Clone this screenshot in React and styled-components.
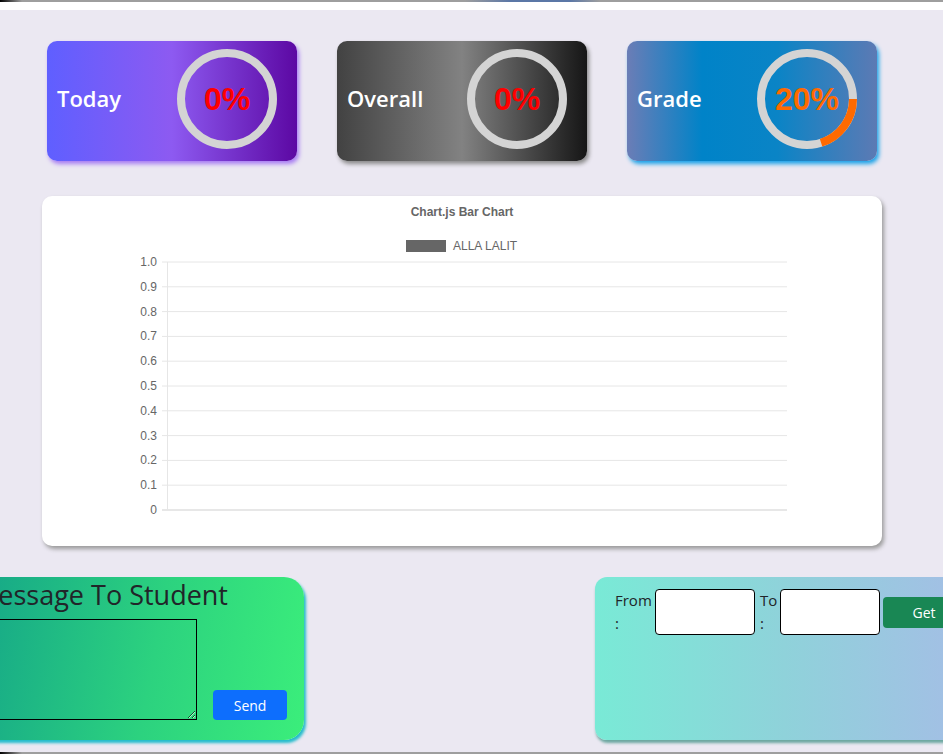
import React from 'react';
import styled, { createGlobalStyle } from 'styled-components';

const GlobalStyle = createGlobalStyle`
  html, body {
    margin: 0;
    padding: 0;
    overflow: hidden;
  }
  body {
    font-family: "Open Sans", "Noto Sans", sans-serif;
    background: #ebe8f2;
  }
`;

const stats = [
    { id: 1, label: 'Today', value: 0, color: '#ff0000', bg: 'linear-gradient(to right, #5f5fff 0%, #8d5af1 50%, #5c08a3 100%)', shadow: '#a77cf3' },
    { id: 2, label: 'Overall', value: 0, color: '#ff0000', bg: 'linear-gradient(to right, #424242 0%, #828282 50%, #161616 100%)', shadow: '#8a8a8a' },
    { id: 3, label: 'Grade', value: 20, color: '#ff6a00', bg: 'linear-gradient(to right, #6b7db6 0%, #0083c8 30%, #0a84c6 60%, #5c7ab4 100%)', shadow: '#1aa2e8' },
];

const ticks = ['1.0', '0.9', '0.8', '0.7', '0.6', '0.5', '0.4', '0.3', '0.2', '0.1', '0'];

function Ring({ value, color }) {
    const r = 46;
    const c = 2 * Math.PI * r;
    return (
        <RingBox>
            <svg width="100" height="100" viewBox="0 0 100 100">
                <circle cx="50" cy="50" r={r} fill="none" stroke="#d4d4d4" strokeWidth="8" />
                {value > 0 && (
                    <circle
                        cx="50" cy="50" r={r} fill="none" stroke="#ff6a00" strokeWidth="8"
                        strokeDasharray={`${(c * value) / 100} ${c}`}
                    />
                )}
            </svg>
            <RingText color={color}>{value}%</RingText>
        </RingBox>
    );
}

function BarChart() {
    const top = 66;
    const step = 24.8;
    return (
        <svg width="840" height="350" viewBox="0 0 840 350">
            <text x="420" y="20" textAnchor="middle" fontFamily="Liberation Sans, Arial, sans-serif" fontSize="12" fontWeight="bold" fill="#666">
                Chart.js Bar Chart
            </text>
            <rect x="364" y="44" width="40" height="12" fill="#666" />
            <text x="411" y="54" fontFamily="Liberation Sans, Arial, sans-serif" fontSize="12" fill="#666">ALLA LALIT</text>
            {ticks.map((t, i) => {
                const y = top + i * step;
                return (
                    <g key={t}>
                        <line x1="120" x2="745" y1={y} y2={y} stroke={i === ticks.length - 1 ? '#cfcfcf' : '#e6e6e6'} strokeWidth="1" />
                        <text x="115" y={y + 4} textAnchor="end" fontFamily="Liberation Sans, Arial, sans-serif" fontSize="12" fill="#666">{t}</text>
                    </g>
                );
            })}
            <line x1="125.5" x2="125.5" y1={top} y2={top + 10 * step} stroke="#e6e6e6" strokeWidth="1" />
        </svg>
    );
}

function App() {
    return (
        <Page>
            <GlobalStyle />
            <TopBar />
            <TopGap />
            <Main>
                <StatRow>
                    {stats.map((s) => (
                        <StatCard key={s.id} $bg={s.bg} $shadow={s.shadow}>
                            <StatLabel>{s.label}</StatLabel>
                            <Ring value={s.value} color={s.color} />
                        </StatCard>
                    ))}
                </StatRow>

                <ChartCard>
                    <BarChart />
                </ChartCard>

                <BottomRow>
                    <MessageCard>
                        <MessageTitle>Message To Student</MessageTitle>
                        <MessageBody>
                            <MessageInput />
                            <SendButton>Send</SendButton>
                        </MessageBody>
                    </MessageCard>

                    <FilterCard>
                        <FieldLabel $w={40}>From :</FieldLabel>
                        <DateInput />
                        <FieldLabel $w={20}>To :</FieldLabel>
                        <DateInput />
                        <GetButton>Get</GetButton>
                    </FilterCard>
                </BottomRow>
            </Main>
            <BottomBar />
        </Page>
    );
}

const Page = styled.div`
width: 943px;
height: 754px;
overflow: hidden;
display: flex;
flex-direction: column;
`;

const TopBar = styled.div`
height: 2px;
background: linear-gradient(to right, #000 0px, #9e9e9e 22px, #9e9e9e 465px, #5b77a6 510px, #5b77a6 570px, #9e9e9e 600px);
`;

const TopGap = styled.div`
height: 8px;
background: #fff;
`;

const Main = styled.div`
flex: 1;
background: #ebe8f2;
display: flex;
flex-direction: column;
`;

const StatRow = styled.div`
display: flex;
gap: 40px;
padding: 31px 0 0 47px;
`;

const StatCard = styled.div`
width: 250px;
height: 120px;
box-sizing: border-box;
border-radius: 10px;
background: ${(p) => p.$bg};
box-shadow: 2px 3px 4px ${(p) => p.$shadow};
display: flex;
align-items: center;
justify-content: space-between;
padding: 0 20px 4px 10px;
`;

const StatLabel = styled.div`
color: #fff;
font-size: 22px;
font-weight: 600;
margin-bottom: 3px;
`;

const RingBox = styled.div`
display: grid;
place-items: center;
width: 100px;
height: 100px;

> * {
    grid-area: 1 / 1;
}
`;

const RingText = styled.div`
color: ${(p) => p.color};
font-family: "Liberation Sans", Arial, sans-serif;
font-weight: bold;
font-size: 32px;
`;

const ChartCard = styled.div`
margin: 35px 0 0 42px;
width: 840px;
height: 350px;
background: #fff;
border-radius: 10px;
box-shadow: 2px 3px 4px #9a9a9a;
`;

const BottomRow = styled.div`
display: flex;
justify-content: space-between;
margin-top: 31px;
`;

const MessageCard = styled.div`
margin-left: -34px;
width: 338px;
height: 163px;
box-sizing: border-box;
padding: 1px 17px 0 10px;
border-radius: 20px;
background: linear-gradient(100deg, #14a488 0%, #2cd27f 55%, #3bee7b 100%);
box-shadow: 2px 3px 3px #22bccb;
`;

const MessageTitle = styled.div`
font-size: 27px;
font-weight: 500;
color: #212529;
line-height: 34px;
margin-left: -2px;
white-space: nowrap;
`;

const MessageBody = styled.div`
display: flex;
align-items: flex-end;
gap: 16px;
margin-top: 7px;
`;

const MessageInput = styled.textarea`
width: 222px;
height: 101px;
box-sizing: border-box;
border: 1px solid #000;
background: transparent;
padding: 2px;
margin: 0;
`;

const SendButton = styled.button`
width: 74px;
height: 30px;
border: none;
border-radius: 4px;
background: #0d6efd;
color: #fff;
font-family: "Open Sans", "Noto Sans", sans-serif;
font-size: 14px;
`;

const FilterCard = styled.div`
width: 380px;
margin-right: -32px;
height: 163px;
box-sizing: border-box;
padding: 12px 0 0 20px;
border-radius: 12px;
background: linear-gradient(to right, #79ead6 0%, #8fd2da 50%, #a5bde6 100%);
box-shadow: 1px 3px 3px #6aa69f;
display: flex;
align-items: flex-start;
`;

const FieldLabel = styled.label`
width: ${(p) => p.$w}px;
font-size: 15px;
line-height: 23px;
color: #212529;
`;

const DateInput = styled.input`
width: 100px;
height: 46px;
box-sizing: border-box;
border: 1px solid #000;
border-radius: 4px;
background: #fff;
margin: 0 5px 0 0;
`;

const GetButton = styled.button`
width: 82px;
height: 31px;
margin: 8px 0 0 -2px;
border: none;
border-radius: 4px;
background: #198754;
color: #fff;
font-family: "Open Sans", "Noto Sans", sans-serif;
font-size: 14px;
`;

const BottomBar = styled.div`
height: 2px;
background: linear-gradient(to right, #000 0px, #9e9e9e 22px);
`;

export default App;
